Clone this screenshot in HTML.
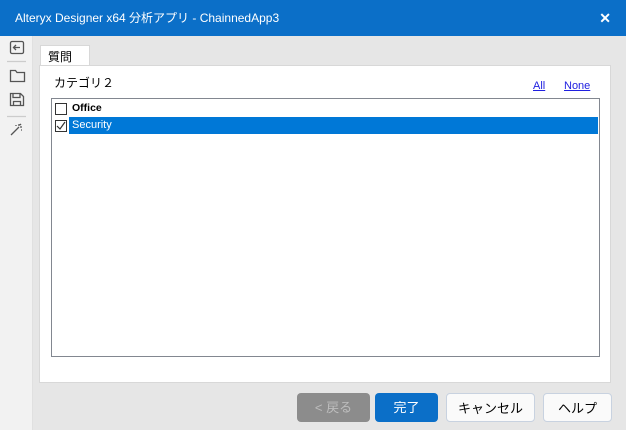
<!DOCTYPE html>
<html><head><meta charset="utf-8"><style>
*{margin:0;padding:0;box-sizing:border-box}
body{width:626px;height:430px;background:#e6e6e6;font-family:"Liberation Sans","Noto Sans CJK JP",sans-serif;position:relative;overflow:hidden;font-size:12px;color:#000}
.title{position:absolute;left:0;top:0;width:626px;height:36px;background:#0b6fc8;color:#fff;font-size:12px;line-height:36px;padding-left:15px}
.x{position:absolute;right:15px;top:0;font-size:14px;font-weight:bold}
.side{position:absolute;left:0;top:36px;width:33px;height:394px;background:#f2f2f2;border-right:1px solid #e0e0e0}
.tab{position:absolute;left:40px;top:45px;width:50px;height:21px;background:#fff;border:1px solid #d8d8d8;border-bottom:none;font-size:12px;padding:2px 0 0 7px}
.panel{position:absolute;left:39px;top:65px;width:572px;height:318px;background:#fff;border:1px solid #d8d8d8}
.cat{position:absolute;left:54px;top:74px;font-size:12px}
.lnk{position:absolute;top:80px;color:#2020e0;text-decoration:underline;font-size:11px}
.list{position:absolute;left:51px;top:98px;width:549px;height:259px;border:1px solid #828790;background:#fff}
.row{position:absolute;left:0;height:17px;font-size:11px;line-height:16px}
.cb{position:absolute;left:3px;top:3px;width:12px;height:12px;border:1px solid #333;background:#fff}
.btn{position:absolute;top:393px;height:29px;border-radius:4px;font-size:13px;text-align:center;line-height:29px}
</style></head><body>
<div class="title">Alteryx Designer x64 分析アプリ - ChainnedApp3<span class="x">✕</span></div>
<div class="side">
<svg width="33" height="110" viewBox="0 0 33 110" fill="none" stroke="#555" stroke-width="1.3">
<rect x="10.5" y="5.5" width="13" height="12" rx="1.5"/><path d="M20 11.5h-6M16 9l-2.5 2.5L16 14"/>
<path d="M7 25.5h19" stroke="#ccc"/>
<path d="M10.5 34.5h5l1.5 2h7.5v9h-14z"/>
<path d="M10.5 57.5h10l3 3v9h-13z M13 57.5v4h7v-4 M13.5 69.5v-4h7v4"/>
<path d="M7 80.5h19" stroke="#ccc"/>
<path d="M11 99l8-8M19 88v2M22 91h-2M21 88l-1 1M16 89v1M22 94h-1"/>
</svg></div>
<div class="tab">質問</div>
<div class="panel"></div>
<div class="cat">カテゴリ２</div>
<div class="lnk" style="left:533px">All</div>
<div class="lnk" style="left:564px">None</div>
<div class="list">
<div class="row" style="top:1px;width:547px"><span class="cb"></span><span style="position:absolute;left:20px;font-weight:bold;font-size:10.5px">Office</span></div>
<div class="row" style="top:18px;width:547px"><span class="cb" style="border-color:#333"><svg width="10" height="10" style="position:absolute;left:0;top:0"><path d="M1 5l3 3 5-7" stroke="#333" fill="none" stroke-width="1.2"/></svg></span><span style="position:absolute;left:17px;top:0;width:529px;height:17px;background:#0078d7;color:#fff;padding-left:3px;font-size:11px">Security</span></div>
</div>
<div class="btn" style="left:297px;width:73px;background:#8c8c8c;color:#bdbdbd">&lt; 戻る</div>
<div class="btn" style="left:375px;width:63px;background:#0b6fc8;color:#fff">完了</div>
<div class="btn" style="left:446px;width:89px;background:#fafafa;border:1px solid #c8d2e0">キャンセル</div>
<div class="btn" style="left:543px;width:69px;background:#fafafa;border:1px solid #c8d2e0">ヘルプ</div>
</body></html>
